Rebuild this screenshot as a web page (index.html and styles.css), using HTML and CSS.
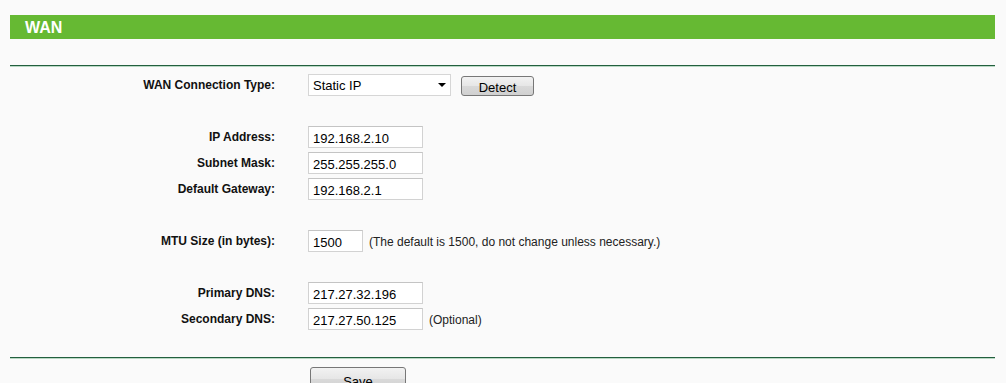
FILE: index.html
```html
<!DOCTYPE html>
<html>
	<head>
		<title>WAN</title>
		<link rel="stylesheet" href="styles.css">
	</head>
	<body>
		<div class="title">WAN</div>
		<div class="rule"></div>
		<form class="form">
			<label>WAN Connection Type:</label>
			<div class="field">
				<div class="select">
					<select>
						<option>Static IP</option>
						<option>Dynamic IP</option>
						<option>PPPoE</option>
					</select>
				</div>
				<button type="button" class="btn detect">Detect</button>
			</div>
			<div class="blank"></div>

			<label>IP Address:</label>
			<div class="field"><input type="text" value="192.168.2.10"></div>
			<label>Subnet Mask:</label>
			<div class="field"><input type="text" value="255.255.255.0"></div>
			<label>Default Gateway:</label>
			<div class="field"><input type="text" value="192.168.2.1"></div>
			<div class="blank"></div>

			<label>MTU Size (in bytes):</label>
			<div class="field"><input type="text" class="short" value="1500"><span class="note">(The default is 1500, do not change unless necessary.)</span></div>
			<div class="blank"></div>

			<label>Primary DNS:</label>
			<div class="field"><input type="text" value="217.27.32.196"></div>
			<label>Secondary DNS:</label>
			<div class="field"><input type="text" value="217.27.50.125"><span class="note">(Optional)</span></div>
		</form>
		<div class="rule bottom"></div>
		<div class="actions">
			<button type="button" class="btn save">Save</button>
		</div>
	</body>
</html>
```

FILE: styles.css
```css
html {
	background-color: #fafafa;
}
body {
	margin: 0;
	padding: 15px 11px 0 10px;
	font-family: "Liberation Sans", Arial, sans-serif;
	font-size: 12px;
	color: #000;
	overflow: hidden;
}
.title {
	height: 24px;
	line-height: 25px;
	background-color: #66b933;
	color: white;
	font-weight: bold;
	font-size: 16px;
	padding-left: 15px;
}
.rule {
	margin-top: 26px;
	height: 1px;
	background-color: #235f3e;
	border-bottom: 1px solid #b9d8c4;
}
.rule.bottom {
	margin-top: 25px;
}
.form {
	display: grid;
	grid-template-columns: 265px 1fr;
	grid-auto-rows: 26px;
	column-gap: 33px;
	margin: 5px 0 0;
}
.form label {
	font-weight: bold;
	text-align: right;
	line-height: 27px;
	color: #111;
}
.blank {
	grid-column: 1 / 3;
}
.field {
	display: flex;
	align-items: center;
}
input {
	width: 115px;
	height: 22px;
	box-sizing: border-box;
	border: 1px solid #d2d2d2;
	border-top-color: #c4c4c4;
	background: white;
	font-family: "Liberation Sans", Arial, sans-serif;
	font-size: 13px;
	padding: 2px 4px 0;
	margin: 0;
	color: #000;
}
input.short {
	width: 55px;
}
.note {
	margin-left: 6px;
	color: #222;
	padding-top: 1px;
}
.select {
	position: relative;
	width: 143px;
	height: 22px;
}
.select select {
	appearance: none;
	-webkit-appearance: none;
	width: 100%;
	height: 22px;
	border: 1px solid #d6d6d6;
	background: white;
	font-family: "Liberation Sans", Arial, sans-serif;
	font-size: 13px;
	padding: 1px 4px 0;
	margin: 0;
	border-radius: 0;
	color: #000;
}
.select::after {
	content: "";
	position: absolute;
	right: 5px;
	top: 9px;
	border-left: 4px solid transparent;
	border-right: 4px solid transparent;
	border-top: 4px solid #000;
	pointer-events: none;
}
.btn {
	height: 20px;
	box-sizing: border-box;
	border: 1px solid #777;
	border-radius: 3px;
	background: linear-gradient(#f2f2f2, #e6e6e6 50%, #d9d9d9 51%, #d0d0d0);
	font-family: "Liberation Sans", Arial, sans-serif;
	font-size: 13px;
	color: #000;
	padding: 2px 0 0;
	margin: 0;
}
.detect {
	width: 73px;
	margin-left: 10px;
	margin-top: 2px;
}
.actions {
	padding-left: 300px;
	padding-top: 8px;
}
.save {
	width: 96px;
	height: 24px;
	font-size: 13px;
	padding-top: 4px;
}
```
